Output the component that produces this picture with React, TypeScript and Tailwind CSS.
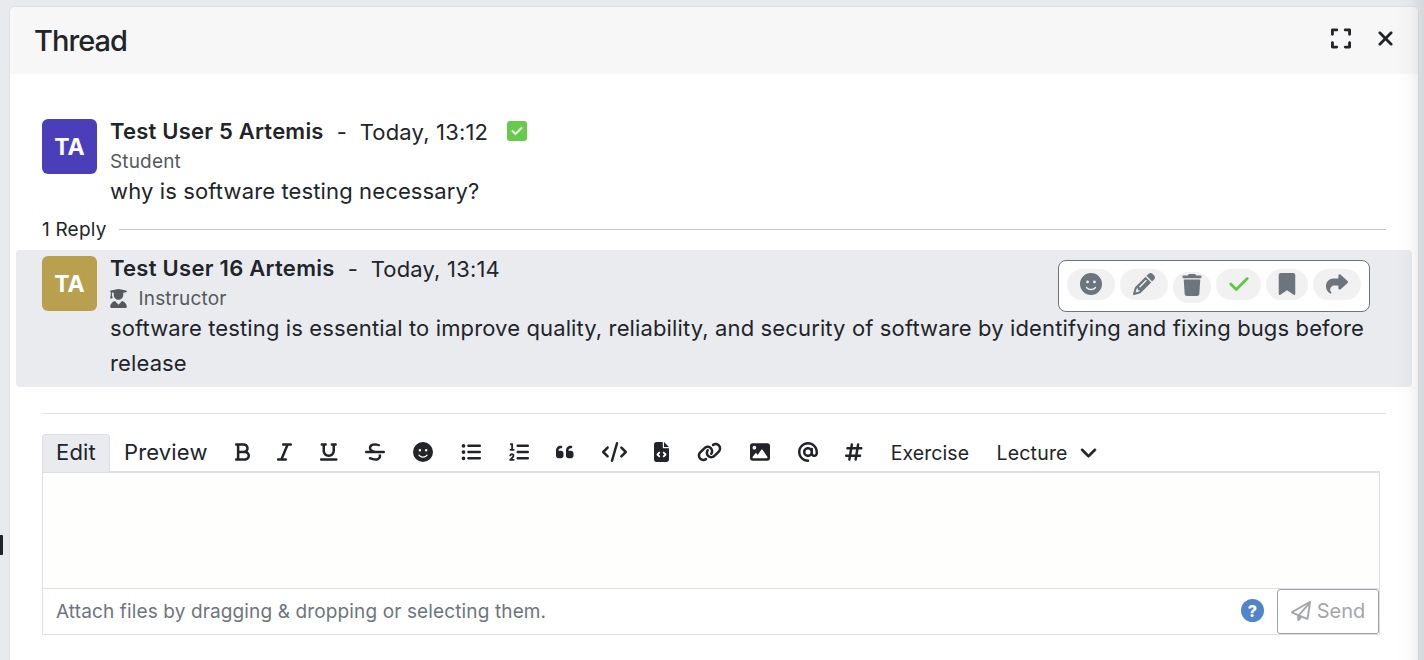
import type { ReactNode } from "react";
import type { IconType } from "react-icons";
import {
  FaAt, FaBold, FaBookmark, FaCheck, FaChevronDown, FaCode, FaExpand, FaFaceSmile, FaFileCode,
  FaHashtag, FaImage, FaItalic, FaLink, FaListOl, FaListUl, FaPencil, FaQuoteLeft, FaRegPaperPlane,
  FaShare, FaStrikethrough, FaTrash, FaUnderline, FaUserGraduate, FaXmark,
} from "react-icons/fa6";

const tools: { icon: IconType; size: string }[] = [
  { icon: FaBold, size: "w-[15px]" },
  { icon: FaItalic, size: "w-[15px]" },
  { icon: FaUnderline, size: "w-[17.5px]" },
  { icon: FaStrikethrough, size: "w-[20px]" },
  { icon: FaFaceSmile, size: "w-[20px]" },
  { icon: FaListUl, size: "w-[20px]" },
  { icon: FaListOl, size: "w-[20px]" },
  { icon: FaQuoteLeft, size: "w-[17.5px]" },
  { icon: FaCode, size: "w-[25px]" },
  { icon: FaFileCode, size: "w-[15px]" },
  { icon: FaLink, size: "w-[25px]" },
  { icon: FaImage, size: "w-[20px]" },
  { icon: FaAt, size: "w-[20px]" },
  { icon: FaHashtag, size: "w-[17.5px]" },
];

const actions: { icon: IconType; box: string; glyph: string }[] = [
  { icon: FaFaceSmile, box: "w-12", glyph: "text-[#6c757d]" },
  { icon: FaPencil, box: "w-12", glyph: "text-[#6c757d]" },
  { icon: FaTrash, box: "w-[38px] mt-[3px]", glyph: "text-[#6c757d] -mt-1" },
  { icon: FaCheck, box: "w-[45px]", glyph: "text-[#5bc944]" },
  { icon: FaBookmark, box: "w-[42px]", glyph: "text-[#6c757d]" },
  { icon: FaShare, box: "w-12", glyph: "text-[#6c757d]" },
];

function Avatar({ color }: { color: string }) {
  return (
    <div className={`flex size-[55px] shrink-0 items-center justify-center rounded-md pt-[2px] text-[23px] font-bold text-white ${color}`}>
      TA
    </div>
  );
}

function Post(props: { color: string; name: ReactNode; date: string; role: ReactNode; badge?: ReactNode; children: ReactNode }) {
  return (
    <div className="flex gap-[13px]">
      <Avatar color={props.color} />
      <div className="min-w-0 whitespace-nowrap">
        <div className="flex h-[26px] items-center text-[22px] leading-[26px]">
          <b className="pb-[2px] font-semibold tracking-[0.22px]">{props.name}</b>
          <span className="ml-[13px] w-[10px]">-</span>
          <span className="ml-[13px] tracking-[0.18px]">{props.date}</span>
          {props.badge}
        </div>
        <div className="mt-[4px] flex h-[25px] items-center pt-[2px] text-[19px] tracking-[0.16px] text-[#55595d]">{props.role}</div>
        <div className="text-[22px] leading-[35px] tracking-[0.13px]">{props.children}</div>
      </div>
    </div>
  );
}

export default function App() {
  return (
    <div className="relative flex h-[660px] w-[1424px] overflow-hidden bg-[#e8ebee] pl-[9px] pt-[6px] font-['Inter','Liberation_Sans',sans-serif] text-[#212529]">
      <div className="flex h-[680px] w-[1410px] flex-col rounded-md border border-[#dcdfe5] bg-white">
        <header className="flex h-[67px] shrink-0 items-center justify-between rounded-t-md bg-[#f7f7f7] pl-[24px] pr-[24px]">
          <h1 className="text-[29px] font-medium tracking-[-0.95px]">Thread</h1>
          <div className="flex items-center gap-[26px] pb-[4px]">
            <FaExpand className="h-[23px] w-[20px]" />
            <FaXmark className="h-[23px] w-[17px]" />
          </div>
        </header>

        <section className="mt-[45px] pl-8">
          <Post
            color="bg-[#4a3fb8]"
            name="Test User 5 Artemis"
            date="Today, 13:12"
            role="Student"
            badge={
              <span className="mb-[2px] ml-[19px] flex size-5 items-center justify-center rounded-[3px] bg-[#66cb4c]">
                <FaCheck className="size-[12px] stroke-white stroke-[24px] text-white" />
              </span>
            }
          >
            why is software testing necessary?
          </Post>
        </section>

        <div className="mt-[8px] flex h-[26px] items-center pl-8 pr-8 text-[19px]">
          <span className="w-[77px] shrink-0 tracking-[0.2px]">1 Reply</span>
          <div className="-mt-px h-px flex-1 bg-[#c4c5c7]" />
        </div>

        <section className="relative ml-[6px] mt-[7px] h-[137px] w-[1396px] rounded bg-[#eaebef] pl-[26px] pt-[6px]">
          <Post
            color="bg-[#b9a04e]"
            name={<span className="tracking-[0.28px]">Test User 16 Artemis</span>}
            date="Today, 13:14"
            role={<><FaUserGraduate className="mb-[2px] mr-[11.5px] h-[19px] w-[17px]" />Instructor</>}
          >
            software testing is essential to improve quality, reliability, and security of software by identifying and fixing bugs before<br />release
          </Post>
          <div className="absolute right-[42px] top-[10px] flex h-[52px] w-[312px] gap-[5px] rounded-lg border border-[#6c757d] bg-white pl-2 pt-2">
            {actions.map(({ icon: Icon, box, glyph }, i) => (
              <button key={i} className={`flex h-[31px] shrink-0 items-center justify-center rounded-full bg-[#f1f1f1] pb-px ${box}`}>
                <Icon className={`size-[22px] ${glyph}`} />
              </button>
            ))}
          </div>
        </section>

        <section className="ml-8 mr-8 mt-[26px] border-t border-[#dee2e6] pt-5">
          <div className="flex h-[37px] items-center">
            <button className="h-[38px] w-[68px] shrink-0 rounded-t border border-b-0 border-[#dcdfe5] bg-[#eaebef] pb-[2px] text-[22px] tracking-[0.2px]">Edit</button>
            <button className="ml-[14px] w-[84px] shrink-0 pb-px text-left text-[22px] tracking-[0.15px]">Preview</button>
            <div className="ml-[26.7px] flex items-center gap-[27.76px]">
              {tools.map(({ icon: Icon, size }, i) => (
                <Icon key={i} className={`mb-[2px] h-5 shrink-0 ${size}`} />
              ))}
              <span className="w-[78px] whitespace-nowrap pt-[2px] text-[19.5px] tracking-[0.08px]">Exercise</span>
              <span className="flex items-center whitespace-nowrap text-[19.5px]">
                <span className="w-[84px] pt-[2px] tracking-[0.2px]">Lecture</span>
                <FaChevronDown className="mb-px h-[18px] w-[17px] stroke-current stroke-[22px]" />
              </span>
            </div>
          </div>
          <div className="w-[1338px] border border-t-2 border-[#dcdfe5]">
            <div className="h-[115px] bg-[#fefefc]" />
            <div className="flex h-[46px] items-center border-t border-[#dcdfe5] pl-[13px] text-[19px] text-[#6c757d]">
              <span className="flex-1 pt-px tracking-[0.13px]">Attach files by dragging &amp; dropping or selecting them.</span>
              <span className="mb-[2px] flex size-[23px] items-center justify-center rounded-full bg-[#4f86c9] text-[16px] font-extrabold text-white">?</span>
              <button className="ml-[13px] flex h-[45px] w-[102px] items-center justify-center gap-[6px] rounded-[3px] border border-[#9da3a9] pb-px text-[20px] text-[#a3a6aa]">
                <FaRegPaperPlane className="size-5" />
                Send
              </button>
            </div>
          </div>
        </section>
      </div>
      <div className="absolute left-0 top-[535px] h-5 w-[3px] rounded-r-[1px] bg-[#212529]" />
      <div className="pointer-events-none absolute right-0 top-0 h-full w-[28px] bg-linear-to-r from-black/0 via-black/2 to-black/8" />
    </div>
  );
}
